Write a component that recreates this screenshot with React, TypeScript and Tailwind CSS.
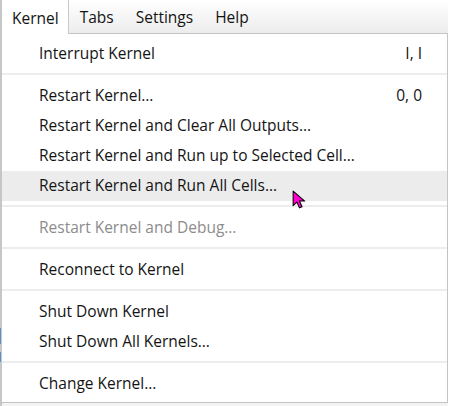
import React from 'react';

type Item = {
  label: string;
  shortcut?: string;
  disabled?: boolean;
  active?: boolean;
};

// groups of menu items, separators between them
const groups: Item[][] = [
  [{ label: 'Interrupt Kernel', shortcut: 'I, I' }],
  [
    { label: 'Restart Kernel…', shortcut: '0, 0' },
    { label: 'Restart Kernel and Clear All Outputs…' },
    { label: 'Restart Kernel and Run up to Selected Cell…' },
    { label: 'Restart Kernel and Run All Cells…', active: true },
  ],
  [{ label: 'Restart Kernel and Debug…', disabled: true }],
  [{ label: 'Reconnect to Kernel' }],
  [{ label: 'Shut Down Kernel' }, { label: 'Shut Down All Kernels…' }],
  [{ label: 'Change Kernel…' }],
];

function Cursor() {
  return (
    <svg
      className="absolute left-[292px] top-[190px]"
      width="17"
      height="21"
      viewBox="0 0 16 20"
    >
      <path
        d="M1 1 L1 15 L4.5 11.5 L7 17 L9.5 16 L7 10.5 L12 10.5 Z"
        fill="#ff00cc"
        stroke="#000"
        strokeWidth="1"
        strokeLinejoin="round"
      />
    </svg>
  );
}

export default function App() {
  return (
    <div className="relative flex h-[406px] w-[450px] overflow-hidden bg-[#f3f3f3] font-['Open_Sans',sans-serif] text-[#141414]">
      <div className="flex w-[2px] flex-col bg-[#c6c6c6]">
        <div className="mt-[328px] h-[16px] w-[1px] bg-[#5b8fd0]" />
        <div className="mt-[8px] h-[10px] w-[1px] bg-[#5b8fd0]" />
      </div>
      <div className="flex w-[446px] flex-col">
        {/* menu bar */}
        <div className="flex h-[34px] bg-gradient-to-b from-white to-[#ececec] text-[15.5px]">
          <div className="flex items-center border-r border-[#c9c9c9] bg-white pl-[10px] pr-[9px] pt-[3px]">
            Kernel
          </div>
          <div className="flex flex-1 items-center gap-[22px] border-b border-[#c4c4c4] pl-[11px] pt-[3px]">
            <span>Tabs</span>
            <span>Settings</span>
            <span>Help</span>
          </div>
        </div>
        {/* dropdown */}
        <div className="flex h-[369px] flex-col border-r border-b border-[#c4c4c4] bg-white pt-[5px] text-[15.5px]">
          {groups.map((group, gi) => (
            <div key={gi}>
              {gi > 0 && (
                <div className="h-[12px] pt-[4px]">
                  <div className="h-[2px] bg-[#ededed]" />
                </div>
              )}
              {group.map((item) => (
                <div
                  key={item.label}
                  className={`flex h-[30px] items-center justify-between pl-[37px] pr-[25px] ${
                    item.active ? 'bg-[#ececec]' : ''
                  } ${item.disabled ? 'text-[#8c8c8c]' : ''}`}
                >
                  <span>{item.label}</span>
                  {item.shortcut && <span>{item.shortcut}</span>}
                </div>
              ))}
            </div>
          ))}
        </div>
      </div>
      <div className="w-[2px] bg-white" />
      <Cursor />
    </div>
  );
}
